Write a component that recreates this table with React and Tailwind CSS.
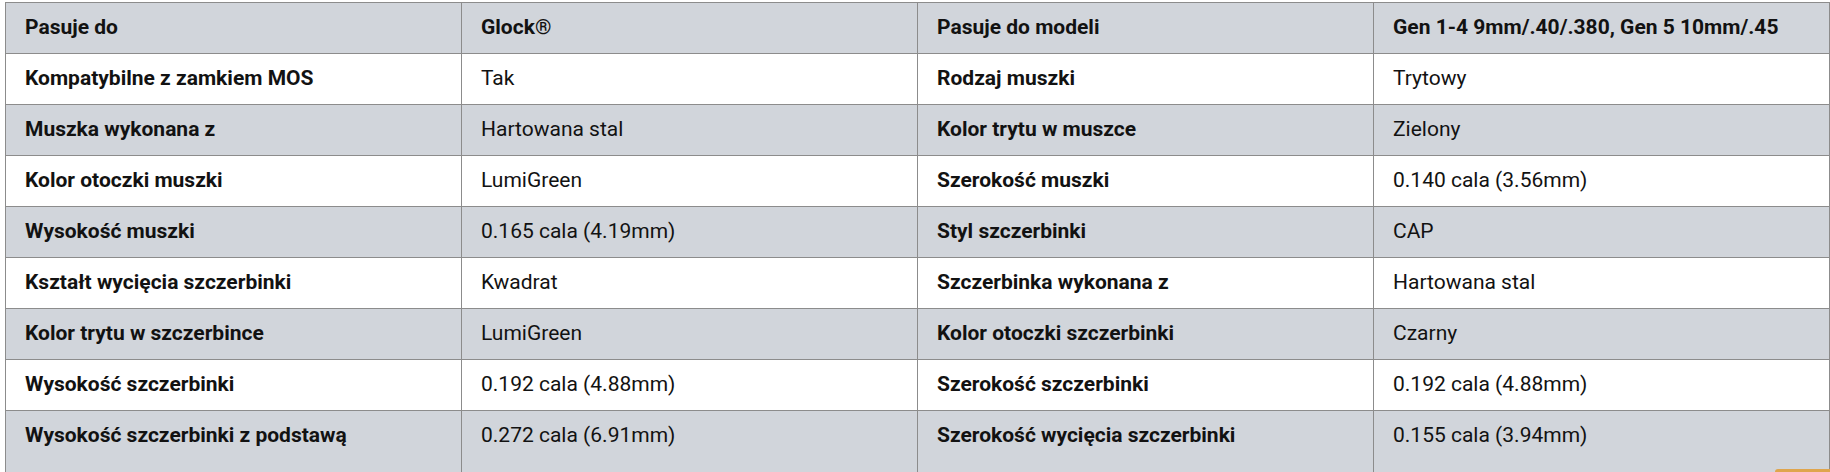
import React from "react";

const rows = [
  ["Pasuje do", "Glock®", "Pasuje do modeli", "Gen 1-4 9mm/.40/.380, Gen 5 10mm/.45"],
  ["Kompatybilne z zamkiem MOS", "Tak", "Rodzaj muszki", "Trytowy"],
  ["Muszka wykonana z", "Hartowana stal", "Kolor trytu w muszce", "Zielony"],
  ["Kolor otoczki muszki", "LumiGreen", "Szerokość muszki", "0.140 cala (3.56mm)"],
  ["Wysokość muszki", "0.165 cala (4.19mm)", "Styl szczerbinki", "CAP"],
  ["Kształt wycięcia szczerbinki", "Kwadrat", "Szczerbinka wykonana z", "Hartowana stal"],
  ["Kolor trytu w szczerbince", "LumiGreen", "Kolor otoczki szczerbinki", "Czarny"],
  ["Wysokość szczerbinki", "0.192 cala (4.88mm)", "Szerokość szczerbinki", "0.192 cala (4.88mm)"],
  ["Wysokość szczerbinki z podstawą", "0.272 cala (6.91mm)", "Szerokość wycięcia szczerbinki", "0.155 cala (3.94mm)"],
];

export default function App() {
  return (
    <div className="relative w-[1830px] h-[472px] overflow-hidden bg-white" style={{ fontFamily: "Roboto, 'Liberation Sans', sans-serif" }}>
      <table className="ml-[5px] mt-[2px] w-[1825px] table-fixed border-collapse text-[21px] leading-[25px] text-[#121212]">
        <tbody>
          {rows.map((r, i) => {
            const gray = i % 2 === 0;
            const last = i === rows.length - 1;
            return (
              <tr key={i} className={gray ? "bg-[#d1d5db]" : "bg-white"}>
                {r.map((c, j) => {
                  const bold = i === 0 || j === 0 || j === 2;
                  return (
                    <td
                      key={j}
                      className={
                        "border border-[#8c8c8c] pl-[19px] pr-2 align-top " +
                        (last ? "pt-[12px] h-[80px] " : "pt-[12px] pb-[13px] ") +
                        (bold ? "font-bold" : "font-normal")
                      }
                    >
                      {c}
                    </td>
                  );
                })}
              </tr>
            );
          })}
        </tbody>
      </table>
      <div className="absolute left-[1775px] top-[469px] h-[10px] w-[60px] rounded-tl-[3px] bg-[#dfa54d]" />
    </div>
  );
}
